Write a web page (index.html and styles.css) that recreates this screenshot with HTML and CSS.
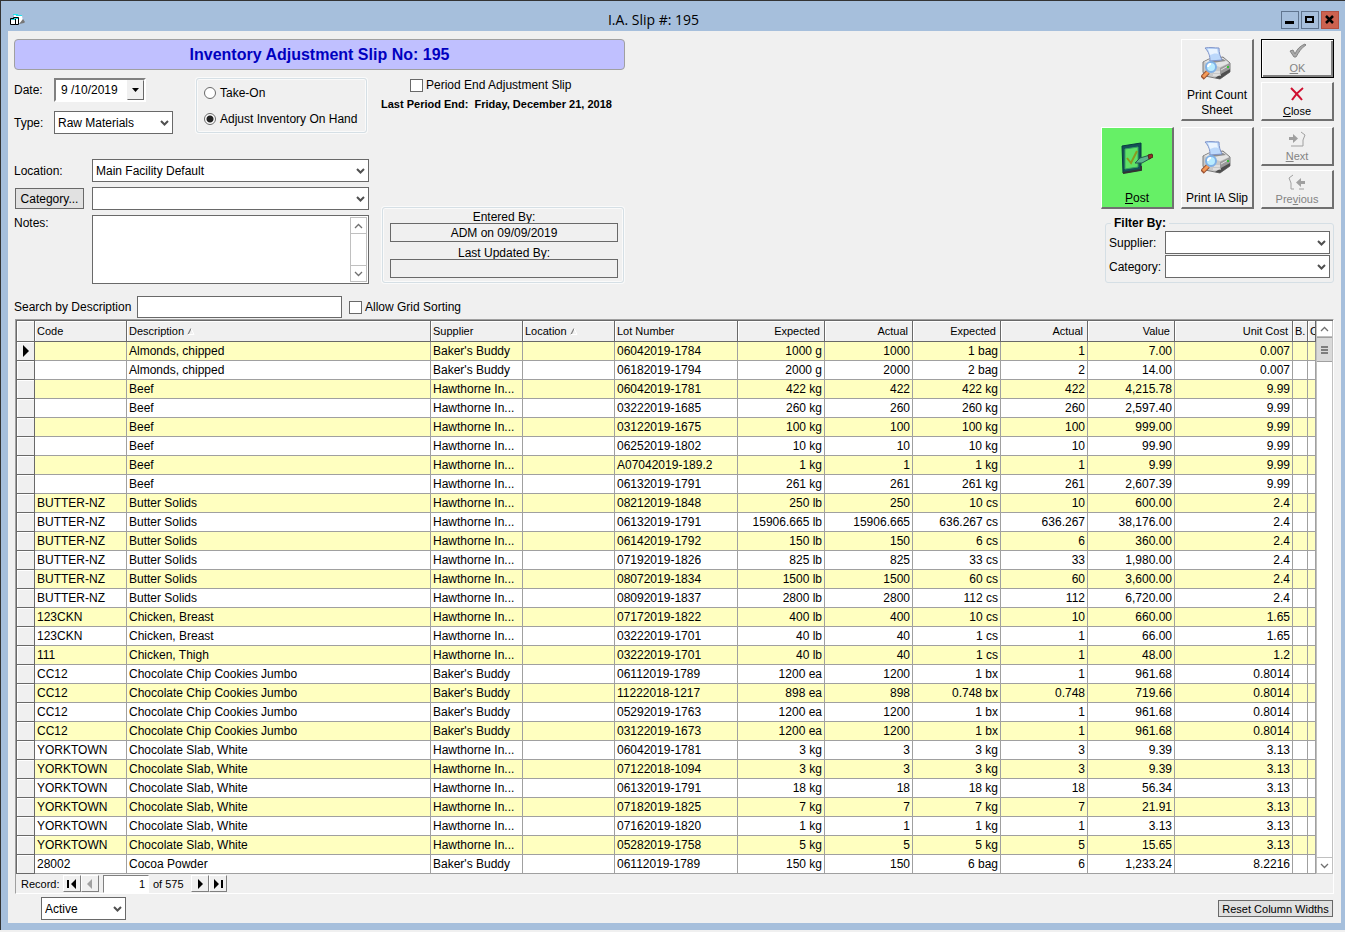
FILE: index.html
```html
<!DOCTYPE html>
<html lang="en">
<head>
  <meta charset="UTF-8" />
  <meta name="viewport" content="width=device-width, initial-scale=1.0"/>
  <title>I.A. Slip #: 195</title>
  <link rel="stylesheet" href="styles.css">
</head>
<body>

<!-- Shared icons -->
<svg class="defs" aria-hidden="true">
  <symbol id="chevron" viewBox="0 0 9 6"><path d="M1 1l3.500 3.500L8 1" fill="none" stroke="#505050" stroke-width="2"/></symbol>
  <symbol id="thin-up" viewBox="0 0 9 6"><path d="M1 5l3.500-3.500L8 5" fill="none" stroke="#707070" stroke-width="1.300"/></symbol>
  <symbol id="thin-down" viewBox="0 0 9 6"><path d="M1 1l3.500 3.500L8 1" fill="none" stroke="#707070" stroke-width="1.300"/></symbol>
  <symbol id="sort" viewBox="0 0 8 7"><path d="M1 6.500L4 .5" stroke="#808080" stroke-width="1.300" fill="none"/><path d="M4 .5l3 6H1" stroke="#fff" fill="none"/></symbol>
  <symbol id="printer" viewBox="0 0 32 34">
    <path d="M2 15l6-3 14-2 7 6v9l-10 7-15-3-2-4z" fill="#c8c8c8" stroke="#7c7c7c"/>
    <path d="M3 15l6-3 13-1 6 5-9 4z" fill="#e4e4e4"/>
    <path d="M8 13l14-1 3 2-14 2z" fill="#8d8d8d"/>
    <path d="M4 1c5-1 9 0 14 0 0 5 1 8 3 12l-12 1C9 9 8 5 4 1z" fill="#bcd8fb" stroke="#7f93c8"/>
    <path d="M7 2h9l1 5c-3-1-5 0-8 1z" fill="#eaf4ff"/>
    <path d="M19 21l10-5v9l-10 6z" fill="#9a9a9a"/>
    <path d="M20 27l9-5v3l-10 7-5-1z" fill="#4e4e4e"/>
    <path d="M20 23l7-4" stroke="#dedede"/>
    <path d="M13 25h6M12 28h8" stroke="#f4f4f4"/>
    <path d="M27 19v2" stroke="#35c335" stroke-width="2"/>
    <path d="M7 25l-6 6" stroke="#9a5030" stroke-width="5"/>
    <path d="M7 25l-5 5" stroke="#f59a58" stroke-width="3"/>
    <circle cx="10" cy="20" r="5" fill="#b9ecff" stroke="#7fb0e6" stroke-width="2"/>
    <path d="M7 20c0-2 1-3 3-3" stroke="#fff" stroke-width="2" fill="none"/>
  </symbol>
</svg>

<div class="window">
  <!-- Title bar -->
  <header class="titlebar">
    <svg class="app-icon" viewBox="0 0 16 12">
      <path d="M4 1l8 1 1 5-5 3-4-2z" fill="#fff"/>
      <path d="M3 .5h5M6 1.500h6" stroke="#22e4ee"/>
      <path d="M13 5l2 3-1 1-5 1z" fill="#777"/>
      <path d="M3.500 3.500h5v7h-5z" fill="#fff" stroke="#000"/>
      <path d="M.5 4.500h5v6h-5z" fill="#fff" stroke="#000"/>
      <path d="M4 4.500h4M1 5.500h4" stroke="#22cbd8"/>
    </svg>
    <h1>I.A. Slip #: 195</h1>
    <div class="window-buttons">
      <button type="button" aria-label="Minimize"><svg viewBox="0 0 16 16"><path d="M3 10.500h9" stroke="#000" stroke-width="3"/></svg></button>
      <button type="button" aria-label="Maximize"><svg viewBox="0 0 16 16"><path d="M4 5h7v5H4z" fill="none" stroke="#000" stroke-width="2"/></svg></button>
      <button type="button" class="quit" aria-label="Close window"><svg viewBox="0 0 16 16"><path d="M4 4l7 7M11 4l-7 7" stroke="#000" stroke-width="2.500"/></svg></button>
    </div>
  </header>

  <main class="content">
    <div class="top">
      <div class="details">
        <h2 class="banner">Inventory Adjustment Slip No: 195</h2>

        <div class="options-row">
          <div class="date-type">
            <div class="field">
              <label for="date">Date:</label>
              <div class="date-box">
                <input type="text" id="date" value="9 /10/2019">
                <button type="button" aria-label="Open calendar"><svg viewBox="0 0 9 5"><path d="M1 0h7L4.500 4z"/></svg></button>
              </div>
            </div>
            <div class="field">
              <label for="type">Type:</label>
              <div class="select type-select">
                <select id="type"><option>Raw Materials</option></select>
                <svg><use href="#chevron"/></svg>
              </div>
            </div>
          </div>

          <fieldset class="frame mode">
            <label><input type="radio" name="mode">Take-On</label>
            <label><input type="radio" name="mode" checked>Adjust Inventory On Hand</label>
          </fieldset>

          <div class="period">
            <label class="check"><input type="checkbox">Period End Adjustment Slip</label>
            <p>Last Period End:&nbsp; Friday, December 21, 2018</p>
          </div>
        </div>

        <div class="location-row">
          <div class="location">
            <label for="location">Location:</label>
            <div class="select">
              <select id="location"><option>Main Facility Default</option></select>
              <svg><use href="#chevron"/></svg>
            </div>
            <button type="button" class="flat-button">Category...</button>
            <div class="select">
              <select aria-label="Category"><option></option></select>
              <svg><use href="#chevron"/></svg>
            </div>
            <label for="notes" class="notes-label">Notes:</label>
            <div class="notes-box">
              <textarea id="notes"></textarea>
              <div class="notes-scroll">
                <button type="button" aria-label="Scroll up"><svg><use href="#thin-up"/></svg></button>
                <button type="button" aria-label="Scroll down"><svg><use href="#thin-down"/></svg></button>
              </div>
            </div>
          </div>

          <div class="frame entered">
            <label for="entered">Entered By:</label>
            <input type="text" id="entered" value="ADM on 09/09/2019" readonly>
            <label for="updated">Last Updated By:</label>
            <input type="text" id="updated" readonly>
          </div>
        </div>
      </div>

      <div class="actions">
        <div class="toolbar">
          <div class="tool-column low">
            <button type="button" class="tool post">
              <svg viewBox="0 0 32 34">
                <path d="M1 5l19-3v27L2 32z" fill="#155057" stroke="#073b40"/>
                <path d="M4 8l13-2v20L4 28z" fill="#5fe266" stroke="#36a660"/>
                <path d="M2 32l18-3v-4" fill="none" stroke="#333" stroke-width="2"/>
                <path d="M6 17l4 5 6-12" fill="none" stroke="#8b9a20" stroke-width="2"/>
                <path d="M14 22l5-5 10-3 1 3-9 5z" fill="#5bb58c" stroke="#245d4e"/>
                <path d="M27 14l4-1 1 3-4 2z" fill="#922f28" stroke="#53231d"/>
              </svg>
              <span><u>P</u>ost</span>
            </button>
          </div>
          <div class="tool-column">
            <button type="button" class="tool"><svg><use href="#printer"/></svg><span>Print Count<br>Sheet</span></button>
            <button type="button" class="tool"><svg><use href="#printer"/></svg><span>Print IA Slip</span></button>
          </div>
          <div class="tool-column">
            <div class="pair">
              <button type="button" class="tool small default" disabled>
                <svg viewBox="0 0 18 16"><path d="M1 8l3-1 2 4c2-5 5-8 10-10l1 1c-5 3-7 7-10 12H5z" fill="#aaa" stroke="#858585"/></svg>
                <span><u>O</u>K</span>
              </button>
              <button type="button" class="tool small">
                <svg viewBox="0 0 18 16"><path d="M3 2c4 4 7 7 11 12M15 2C11 5 7 9 4 14" fill="none" stroke="#d01030" stroke-width="2"/></svg>
                <span><u>C</u>lose</span>
              </button>
            </div>
            <div class="pair">
              <button type="button" class="tool small" disabled>
                <svg viewBox="0 0 18 16"><path d="M1 6h4V3l5 4.500L5 12V9H1z" fill="#a0a0a0"/><path d="M13 1l4 3-2 5v6H3" fill="none" stroke="#a0a0a0"/></svg>
                <span><u>N</u>ext</span>
              </button>
              <button type="button" class="tool small" disabled>
                <svg viewBox="0 0 18 16"><path d="M17 7h-4V4L8 8.500l5 4.500v-3h4z" fill="#a0a0a0"/><path d="M5 1L1 4l2 5v6h3M11 15h5" fill="none" stroke="#a0a0a0"/></svg>
                <span>Pre<u>v</u>ious</span>
              </button>
            </div>
          </div>
        </div>

        <fieldset class="frame filter">
          <legend>Filter By:</legend>
          <label for="f-supplier">Supplier:</label>
          <div class="select"><select id="f-supplier"><option></option></select><svg><use href="#chevron"/></svg></div>
          <label for="f-category">Category:</label>
          <div class="select"><select id="f-category"><option></option></select><svg><use href="#chevron"/></svg></div>
        </fieldset>
      </div>
    </div>

    <div class="search-row">
      <label for="search">Search by Description</label>
      <input type="text" id="search">
      <label class="check"><input type="checkbox">Allow Grid Sorting</label>
    </div>

    <!-- Items grid -->
    <div class="grid">
      <div class="grid-main">
        <div class="table-wrap">
          <table>
            <colgroup>
              <col class="w-mark"><col class="w-code"><col><col class="w-code"><col class="w-code"><col class="w-lot">
              <col class="w-qty"><col class="w-unit"><col class="w-unit"><col class="w-qty"><col class="w-qty">
              <col class="w-cost"><col class="w-b"><col class="w-c">
            </colgroup>
            <thead>
              <tr>
                <th></th><th>Code</th>
                <th>Description <svg><use href="#sort"/></svg></th>
                <th>Supplier</th>
                <th>Location <svg><use href="#sort"/></svg></th>
                <th>Lot Number</th>
                <th class="num">Expected</th><th class="num">Actual</th>
                <th class="num">Expected</th><th class="num">Actual</th>
                <th class="num">Value</th><th class="num">Unit Cost</th>
                <th>B.</th><th>C</th>
              </tr>
            </thead>
            <tbody id="rows"></tbody>
          </table>
        </div>
        <div class="scrollbar">
          <button type="button" aria-label="Scroll up"><svg><use href="#thin-up"/></svg></button>
          <div class="thumb"><svg viewBox="0 0 7 8"><path d="M0 1h7M0 4h7M0 7h7" stroke="#606060" stroke-width="1.500"/></svg></div>
          <button type="button" class="down" aria-label="Scroll down"><svg><use href="#thin-down"/></svg></button>
        </div>
      </div>
      <div class="record-nav">
        <label for="record">Record:</label>
        <button type="button" aria-label="First record"><svg viewBox="0 0 12 10"><path d="M1 1h2v8H1zM10 0v10L5 5z"/></svg></button>
        <button type="button" aria-label="Previous record" disabled><svg viewBox="0 0 12 10"><path d="M8 0v10L3 5z" fill="#a0a0a0"/></svg></button>
        <input type="text" id="record" value="1">
        <span>of 575</span>
        <button type="button" aria-label="Next record"><svg viewBox="0 0 12 10"><path d="M4 0v10l5-5z"/></svg></button>
        <button type="button" aria-label="Last record"><svg viewBox="0 0 12 10"><path d="M2 0v10l5-5zM9 1h2v8H9z"/></svg></button>
      </div>
    </div>

    <footer class="bottom">
      <div class="select status-select">
        <select aria-label="Status"><option>Active</option></select>
        <svg><use href="#chevron"/></svg>
      </div>
      <button type="button" class="flat-button reset">Reset Column Widths</button>
    </footer>
  </main>
</div>

<script src="script.js"></script>
</body>
</html>
```
FILE: styles.css
```css
* {
  box-sizing: border-box;
}
body {
  margin: 0;
  background: #f0f0f0;
  color: #000;
  font: 12px/14px "Liberation Sans", Arial, sans-serif;
}
input, select, textarea, button {
  font: inherit;
  color: inherit;
  margin: 0;
  border-radius: 0;
}
button {
  padding: 0;
}
svg {
  display: block;
}
h1, h2, p {
  margin: 0;
}
.defs {
  display: none;
}
.window {
  background: #a6bfdc;
  border-top: 1px solid #333;
  border-left: 1px solid #333;
  padding: 0 4px 7px 7px;
}

/* Title bar */
.titlebar {
  display: flex;
  align-items: center;
  height: 30px;
  padding: 7px 2px 0 2px;
}
.app-icon {
  width: 16px;
  height: 12px;
}
.titlebar h1 {
  flex: 1;
  text-align: center;
  font: 14px/20px "Open Sans", "Noto Sans", sans-serif;
}
.window-buttons {
  display: flex;
  gap: 2px;
}
.window-buttons button {
  width: 18px;
  height: 18px;
  background: #a6bfdc;
  border: 1px solid #60758f;
}
.window-buttons .quit {
  background: #cc6250;
  border-color: #b34f40;
}

.content {
  background: #f0f0f0;
  padding: 8px 7px 3px 6px;
}
.top {
  display: flex;
  justify-content: space-between;
}
.details {
  width: 611px;
}
.banner {
  height: 31px;
  background: #c0c0ff;
  border: 1px solid #a0a0a0;
  border-radius: 4px;
  color: #0000c0;
  font-size: 16px;
  line-height: 29px;
  text-align: center;
}

/* Shared form parts */
.select {
  position: relative;
  height: 23px;
}
.select select {
  appearance: none;
  width: 100%;
  height: 100%;
  padding: 0 18px 0 3px;
  background: #fff;
  border: 1px solid #696969;
}
.select svg {
  position: absolute;
  right: 4px;
  top: 9px;
  width: 9px;
  height: 6px;
  pointer-events: none;
}
.frame {
  margin: 0;
  border: 1px solid #d5dfe5;
  border-radius: 3px;
  box-shadow: 0 0 0 1px #fafafa, inset 0 0 0 1px #fafafa;
}
input[type="checkbox"], input[type="radio"] {
  appearance: none;
  flex: none;
  width: 13px;
  height: 13px;
  background: #fff;
  border: 1px solid #696969;
}
input[type="radio"] {
  width: 12px;
  height: 12px;
  border-radius: 50%;
}
input[type="radio"]:checked {
  background: radial-gradient(circle, #222 3px, #fff 4px);
}
.check {
  display: flex;
  align-items: center;
  gap: 3px;
}
.flat-button {
  background: #e1e1e1;
  border: 1px solid #696969;
}

/* Date, type and mode */
.options-row {
  display: flex;
  align-items: flex-start;
  margin-top: 8px;
}
.date-type {
  display: flex;
  flex-direction: column;
  gap: 9px;
  width: 182px;
}
.field {
  display: flex;
  align-items: center;
}
.field label {
  width: 40px;
}
.date-box {
  display: flex;
  width: 92px;
  height: 24px;
  background: #fff;
  border: 2px solid #808080;
  border-color: #808080 #fff #fff #808080;
}
.date-box input {
  width: 71px;
  padding: 0 0 0 5px;
  border: 0;
  background: none;
}
.date-box button {
  width: 17px;
  background: #f0f0f0;
  border: 1px solid #696969;
  border-color: #f0f0f0 #696969 #696969 #f0f0f0;
}
.date-box svg {
  width: 9px;
  height: 5px;
  margin: 0 auto;
}
.type-select {
  width: 119px;
}
.mode {
  display: flex;
  flex-direction: column;
  gap: 12px;
  width: 171px;
  height: 55px;
  padding: 7px;
}
.mode label {
  display: flex;
  align-items: center;
  gap: 4px;
}
.period {
  margin-left: 14px;
}
.period .check {
  margin-left: 29px;
}
.period p {
  margin-top: 5px;
  font-size: 11px;
  font-weight: bold;
  white-space: nowrap;
}

/* Location, category, notes */
.location-row {
  display: flex;
  align-items: flex-end;
  margin-top: 25px;
}
.location {
  display: grid;
  grid-template-columns: 70px 277px;
  gap: 5px 8px;
  align-items: center;
}
.location .flat-button {
  height: 21px;
  margin-left: 1px;
}
.notes-label {
  align-self: start;
  margin-top: 1px;
}
.notes-box {
  display: flex;
  height: 69px;
  padding: 1px;
  background: #fff;
  border: 1px solid #696969;
}
.notes-box textarea {
  flex: 1;
  border: 0;
  padding: 2px;
  resize: none;
}
.notes-scroll {
  display: flex;
  flex-direction: column;
  justify-content: space-between;
  width: 17px;
  border: 1px solid #c0c0c0;
}
.notes-scroll button, .scrollbar button {
  height: 16px;
  background: #fff;
  border: 0;
  border-bottom: 1px solid #c0c0c0;
}
.notes-scroll button:last-child {
  border-bottom: 0;
  border-top: 1px solid #c0c0c0;
}
.notes-scroll svg, .scrollbar button svg {
  width: 9px;
  height: 6px;
  margin: 0 auto;
}
.entered {
  display: flex;
  flex-direction: column;
  width: 242px;
  margin: 0 0 1px 13px;
  padding: 3px 5px 4px 7px;
  text-align: center;
}
.entered label {
  line-height: 12px;
}
.entered input {
  height: 19px;
  margin-bottom: 5px;
  padding: 0;
  background: #f0f0f0;
  border: 1px solid #696969;
  text-align: center;
}
.entered input:last-child {
  margin-bottom: 0;
}

/* Toolbar */
.actions {
  display: flex;
  flex-direction: column;
  align-items: flex-end;
}
.toolbar {
  display: flex;
  gap: 7px;
}
.tool-column {
  display: flex;
  flex-direction: column;
  gap: 6px;
  width: 73px;
}
.low {
  justify-content: flex-end;
}
.pair {
  display: flex;
  flex-direction: column;
  gap: 4px;
}
.tool {
  display: flex;
  flex-direction: column;
  align-items: center;
  justify-content: space-between;
  height: 82px;
  padding: 7px 0 1px;
  background: #f0f0f0;
  border: 1px solid #fff;
  border-right: 2px solid #707070;
  border-bottom: 2px solid #707070;
}
.tool span {
  line-height: 15px;
  white-space: nowrap;
}
.tool svg {
  width: 32px;
  height: 34px;
}
.tool:last-child {
  padding-top: 13px;
}
.tool.post {
  background: #66f066;
}
.tool.small {
  height: 39px;
  padding: 3px 0 1px;
  font-size: 11px;
}
.tool.small svg {
  width: 18px;
  height: 16px;
}
.tool.small span {
  line-height: 14px;
}
.tool:disabled {
  color: #838383;
}
.tool.default {
  border: 1px solid #000;
  padding-bottom: 2px;
  box-shadow: inset 1px 1px #fff, inset -2px -2px #808080;
}
.filter {
  display: grid;
  grid-template-columns: 56px 165px;
  row-gap: 1px;
  align-items: center;
  margin-top: 7px;
  padding: 1px 3px 4px;
  box-shadow: none;
}
.filter legend {
  margin-left: 2px;
  padding: 0 3px;
  font-weight: bold;
}

/* Search */
.search-row {
  display: flex;
  align-items: center;
  margin-top: 12px;
}
.search-row > label:first-child {
  width: 120px;
}
.search-row > input {
  width: 205px;
  height: 22px;
  margin: 0 7px 0 3px;
  border: 1px solid #696969;
}

/* Grid */
.grid {
  margin: 1px 0 0 1px;
  border: 1px solid #a0a0a0;
  border-color: #a0a0a0 #fff #fff #a0a0a0;
}
.grid-main {
  display: flex;
  border-top: 1px solid #696969;
  border-left: 1px solid #696969;
}
.table-wrap {
  flex: 1;
  min-width: 0;
}
table {
  width: 100%;
  table-layout: fixed;
  border-collapse: separate;
  border-spacing: 0;
}
.w-mark { width: 18px; }
.w-code { width: 92px; }
.w-lot { width: 123px; }
.w-qty { width: 87px; }
.w-unit { width: 88px; }
.w-cost { width: 118px; }
.w-b { width: 15px; }
.w-c { width: 8px; }
th {
  height: 21px;
  padding: 0 2px;
  border-right: 1px solid #696969;
  border-bottom: 1px solid #696969;
  background: #f0f0f0;
  box-shadow: inset 1px 1px #fff;
  font-size: 11px;
  font-weight: normal;
  text-align: left;
  white-space: nowrap;
  overflow: hidden;
}
th svg {
  display: inline-block;
  width: 8px;
  height: 7px;
}
td {
  height: 19px;
  padding: 0 2px;
  border-right: 1px solid #a0a0a0;
  border-bottom: 1px solid #a0a0a0;
  background: #fff;
  white-space: nowrap;
  overflow: hidden;
}
tr:nth-child(odd) td {
  background: #ffffc0;
}
tbody tr td.mark {
  padding: 0 0 0 6px;
  background: #f0f0f0;
  border-color: #696969;
  box-shadow: inset 1px 1px #fff;
}
.mark svg {
  width: 6px;
  height: 12px;
}
.num {
  text-align: right;
}
th.num {
  padding-right: 4px;
}
.scrollbar {
  display: flex;
  flex-direction: column;
  width: 17px;
  background: #fff;
  border: 1px solid #c0c0c0;
  border-width: 0 1px 1px;
}
.thumb {
  height: 25px;
  padding: 8px 4px;
  background: #dadada;
  border: 1px solid #a0a0a0;
  border-width: 1px 0;
}
.thumb svg {
  width: 7px;
  height: 8px;
}
.scrollbar .down {
  margin-top: auto;
  border-top: 1px solid #c0c0c0;
  border-bottom: 0;
}
.record-nav {
  display: flex;
  align-items: center;
  height: 19px;
  padding-left: 5px;
  font-size: 11px;
}
.record-nav label {
  width: 42px;
}
.record-nav button {
  width: 18px;
  height: 17px;
  background: #f0f0f0;
  border: 1px solid #fff;
  border-right-color: #808080;
  border-bottom-color: #808080;
}
.record-nav svg {
  width: 12px;
  height: 10px;
  margin: 0 auto;
}
.record-nav input {
  width: 46px;
  height: 18px;
  margin: 0 4px;
  padding: 0 3px;
  border: 1px solid #808080;
  border-color: #808080 #fff #fff #808080;
  text-align: right;
}
.record-nav span {
  width: 38px;
}

.bottom {
  display: flex;
  justify-content: space-between;
  align-items: center;
  margin-top: 3px;
  padding: 0 1px 0 27px;
}
.status-select {
  width: 85px;
}
.reset {
  width: 115px;
  height: 17px;
  font-size: 11px;
}
```
FILE: script.js
```js
const BB = "Baker's Buddy";
const HI = "Hawthorne In...";

// code, description, supplier, lot, expected, actual, expected, actual, value, unit cost
const items = [
  ["", "Almonds, chipped", BB, "06042019-1784", "1000 g", "1000", "1 bag", "1", "7.00", "0.007"],
  ["", "Almonds, chipped", BB, "06182019-1794", "2000 g", "2000", "2 bag", "2", "14.00", "0.007"],
  ["", "Beef", HI, "06042019-1781", "422 kg", "422", "422 kg", "422", "4,215.78", "9.99"],
  ["", "Beef", HI, "03222019-1685", "260 kg", "260", "260 kg", "260", "2,597.40", "9.99"],
  ["", "Beef", HI, "03122019-1675", "100 kg", "100", "100 kg", "100", "999.00", "9.99"],
  ["", "Beef", HI, "06252019-1802", "10 kg", "10", "10 kg", "10", "99.90", "9.99"],
  ["", "Beef", HI, "A07042019-189.2", "1 kg", "1", "1 kg", "1", "9.99", "9.99"],
  ["", "Beef", HI, "06132019-1791", "261 kg", "261", "261 kg", "261", "2,607.39", "9.99"],
  ["BUTTER-NZ", "Butter Solids", HI, "08212019-1848", "250 lb", "250", "10 cs", "10", "600.00", "2.4"],
  ["BUTTER-NZ", "Butter Solids", HI, "06132019-1791", "15906.665 lb", "15906.665", "636.267 cs", "636.267", "38,176.00", "2.4"],
  ["BUTTER-NZ", "Butter Solids", HI, "06142019-1792", "150 lb", "150", "6 cs", "6", "360.00", "2.4"],
  ["BUTTER-NZ", "Butter Solids", HI, "07192019-1826", "825 lb", "825", "33 cs", "33", "1,980.00", "2.4"],
  ["BUTTER-NZ", "Butter Solids", HI, "08072019-1834", "1500 lb", "1500", "60 cs", "60", "3,600.00", "2.4"],
  ["BUTTER-NZ", "Butter Solids", HI, "08092019-1837", "2800 lb", "2800", "112 cs", "112", "6,720.00", "2.4"],
  ["123CKN", "Chicken, Breast", HI, "07172019-1822", "400 lb", "400", "10 cs", "10", "660.00", "1.65"],
  ["123CKN", "Chicken, Breast", HI, "03222019-1701", "40 lb", "40", "1 cs", "1", "66.00", "1.65"],
  ["111", "Chicken, Thigh", HI, "03222019-1701", "40 lb", "40", "1 cs", "1", "48.00", "1.2"],
  ["CC12", "Chocolate Chip Cookies Jumbo", BB, "06112019-1789", "1200 ea", "1200", "1 bx", "1", "961.68", "0.8014"],
  ["CC12", "Chocolate Chip Cookies Jumbo", BB, "11222018-1217", "898 ea", "898", "0.748 bx", "0.748", "719.66", "0.8014"],
  ["CC12", "Chocolate Chip Cookies Jumbo", BB, "05292019-1763", "1200 ea", "1200", "1 bx", "1", "961.68", "0.8014"],
  ["CC12", "Chocolate Chip Cookies Jumbo", BB, "03122019-1673", "1200 ea", "1200", "1 bx", "1", "961.68", "0.8014"],
  ["YORKTOWN", "Chocolate Slab, White", HI, "06042019-1781", "3 kg", "3", "3 kg", "3", "9.39", "3.13"],
  ["YORKTOWN", "Chocolate Slab, White", HI, "07122018-1094", "3 kg", "3", "3 kg", "3", "9.39", "3.13"],
  ["YORKTOWN", "Chocolate Slab, White", HI, "06132019-1791", "18 kg", "18", "18 kg", "18", "56.34", "3.13"],
  ["YORKTOWN", "Chocolate Slab, White", HI, "07182019-1825", "7 kg", "7", "7 kg", "7", "21.91", "3.13"],
  ["YORKTOWN", "Chocolate Slab, White", HI, "07162019-1820", "1 kg", "1", "1 kg", "1", "3.13", "3.13"],
  ["YORKTOWN", "Chocolate Slab, White", HI, "05282019-1758", "5 kg", "5", "5 kg", "5", "15.65", "3.13"],
  ["28002", "Cocoa Powder", BB, "06112019-1789", "150 kg", "150", "6 bag", "6", "1,233.24", "8.2216"]
];

const marker = '<svg viewBox="0 0 6 12"><path d="M0 0v12l6-6z"/></svg>';

document.getElementById('rows').innerHTML = items.map((item, i) => {
  const [code, desc, supplier, lot, ...numbers] = item;
  const cells = [code, desc, supplier, '', lot].map(text => `<td>${text}</td>`).join('');
  const nums = numbers.map(n => `<td class="num">${n}</td>`).join('');
  return `<tr><td class="mark">${i === 0 ? marker : ''}</td>${cells}${nums}<td></td><td></td></tr>`;
}).join('');
```
